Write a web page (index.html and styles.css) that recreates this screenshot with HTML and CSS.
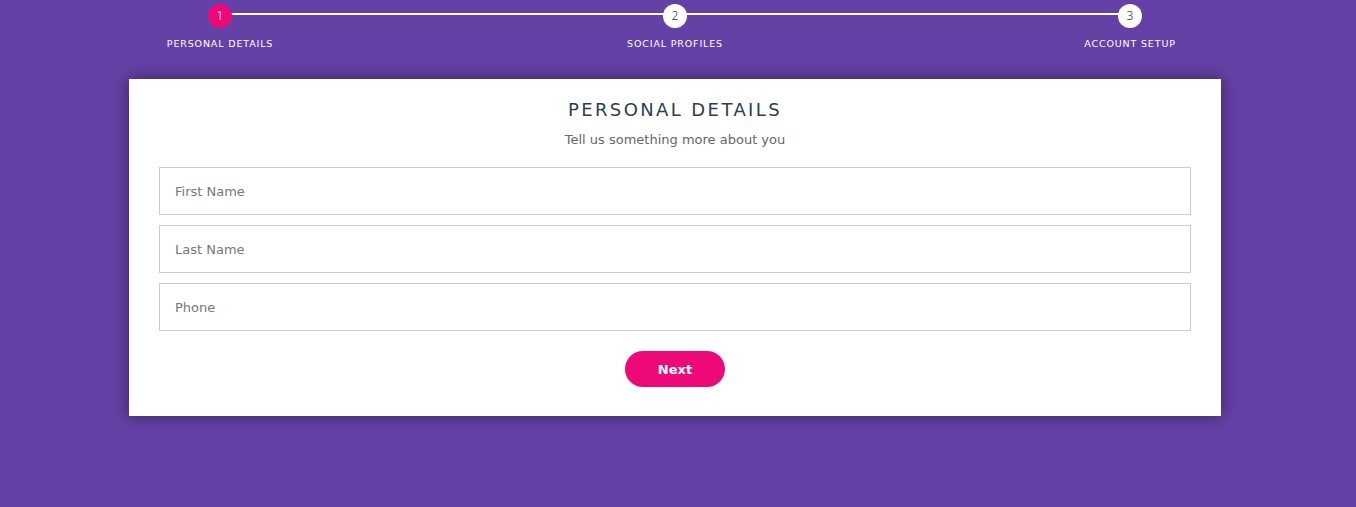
FILE: index.html
```html
<!DOCTYPE html>
<html>
<head>
<meta charset="utf-8">
<link rel="stylesheet" href="styles.css">
</head>
<body>
<div class="page">
  <ul class="progress">
    <li class="step active"><span class="dot">1</span><span class="label">Personal Details</span></li>
    <li class="step"><span class="dot">2</span><span class="label">Social Profiles</span></li>
    <li class="step"><span class="dot">3</span><span class="label">Account Setup</span></li>
  </ul>
  <form class="card">
    <h2 class="title">Personal Details</h2>
    <h3 class="subtitle">Tell us something more about you</h3>
    <input class="field" type="text" placeholder="First Name">
    <input class="field" type="text" placeholder="Last Name">
    <input class="field" type="text" placeholder="Phone">
    <button class="next" type="button">Next</button>
  </form>
</div>
</body>
</html>
```
FILE: styles.css
```css
html, body {
  margin: 0;
  padding: 0;
  background: #6441a5;
  font-family: "DejaVu Sans", "Noto Sans", sans-serif;
  overflow: hidden;
}
.page {
  width: 1350px;
  height: 507px;
}
.progress {
  list-style: none;
  margin: 0 auto;
  padding: 4px 0 0;
  width: 1110px;
  display: flex;
  justify-content: space-between;
  position: relative;
}
.progress::before {
  content: "";
  position: absolute;
  left: 100px;
  right: 100px;
  top: 13px;
  height: 2px;
  background: #fff;
}
.step {
  width: 200px;
  display: flex;
  flex-direction: column;
  align-items: center;
  position: relative;
}
.dot {
  width: 24px;
  height: 24px;
  border-radius: 50%;
  background: #fff;
  color: #333;
  font-family: "Noto Sans", sans-serif;
  font-weight: 300;
  font-size: 12px;
  line-height: 24px;
  text-align: center;
}
.step.active .dot {
  background: #ee0979;
  color: #fff;
}
.label {
  margin-top: 11px;
  color: #fff;
  font-size: 9.5px;
  text-transform: uppercase;
  letter-spacing: 0.85px;
  line-height: 10px;
}
.card {
  box-sizing: border-box;
  width: 1092px;
  margin: 30px auto 0;
  background: #fff;
  padding: 20px 30px 29px;
  box-shadow: 0 0 15px 1px rgba(0, 0, 0, 0.4);
  display: flex;
  flex-direction: column;
  align-items: center;
}
.title {
  margin: 0;
  font-size: 18px;
  font-weight: normal;
  text-transform: uppercase;
  letter-spacing: 2.4px;
  color: #2c3e50;
  line-height: 22px;
}
.subtitle {
  margin: 11px 0 19px;
  font-weight: normal;
  font-size: 13px;
  color: #666;
  line-height: 16px;
}
.field {
  box-sizing: border-box;
  width: 100%;
  height: 48px;
  margin: 0 0 10px;
  padding: 0 15px;
  border: 1px solid #ccc;
  border-radius: 0;
  font-family: inherit;
  font-size: 13px;
  color: #2c3e50;
  outline: none;
}
.field::placeholder {
  color: #777;
}
.next {
  margin-top: 10px;
  width: 100px;
  height: 36px;
  border: none;
  border-radius: 25px;
  background: #ee0979;
  color: #fff;
  font-family: inherit;
  font-weight: bold;
  font-size: 13px;
}
```
